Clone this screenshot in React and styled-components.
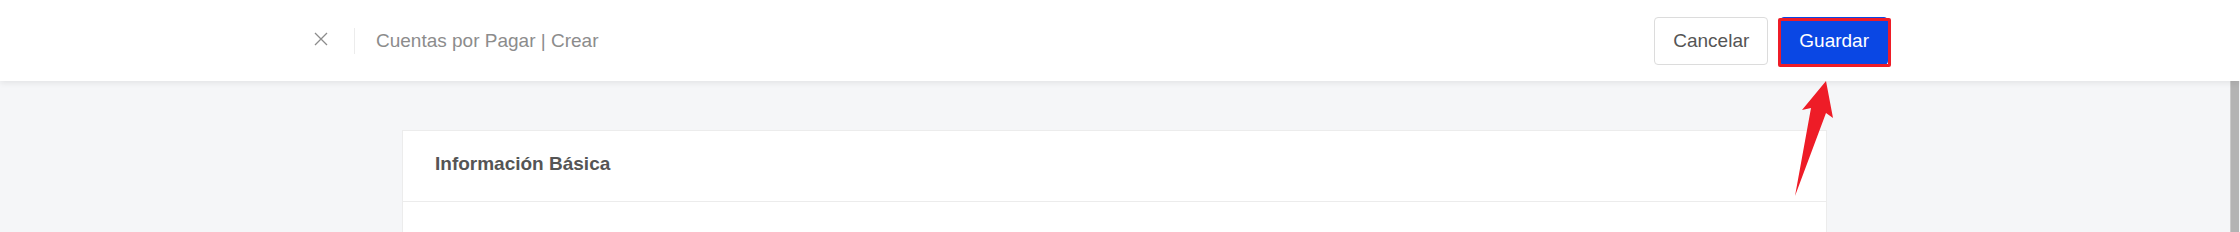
import React from "react";
import styled, { createGlobalStyle } from "styled-components";

const GlobalStyle = createGlobalStyle`
  html, body {
    margin: 0;
    padding: 0;
    background: #f5f6f8;
    font-family: "Liberation Sans", Arial, sans-serif;
  }
`;

const Page = styled.div`
  width: 2240px;
  height: 232px;
  display: flex;
  flex-direction: column;
  overflow: hidden;
  position: relative;
`;

const Header = styled.header`
  height: 81px;
  flex: none;
  background: #fff;
  display: flex;
  align-items: center;
  padding: 0 352px 0 314px;
  box-shadow: 0 2px 6px rgba(0, 0, 0, 0.08);
  position: relative;
  z-index: 1;
`;

const CloseButton = styled.button`
  border: none;
  background: none;
  padding: 0;
  width: 14px;
  height: 14px;
  display: flex;
  margin-top: -3px;
  cursor: pointer;
`;

const Divider = styled.span`
  width: 1px;
  height: 26px;
  background: #ececec;
  margin: 0 21px 0 26px;
`;

const Title = styled.h1`
  margin: 0;
  font-size: 19px;
  font-weight: 400;
  color: #8c8c8c;
  flex: 1;
`;

const Actions = styled.div`
  display: flex;
  gap: 12px;
  align-items: center;
`;

const Button = styled.button`
  height: 48px;
  padding: 0 18px;
  font-family: inherit;
  font-size: 19px;
  border-radius: 4px;
  cursor: pointer;
  border: 1px solid ${(p) => (p.$primary ? "#0a47e4" : "#dcdcdc")};
  background: ${(p) => (p.$primary ? "#0a47e4" : "#fff")};
  color: ${(p) => (p.$primary ? "#fff" : "#555")};
`;

const Highlight = styled.div`
  position: relative;
  &::after {
    content: "";
    position: absolute;
    left: -2px;
    right: -3px;
    top: 1px;
    bottom: -2px;
    border: 3px solid #ee1c27;
    border-radius: 2px;
    pointer-events: none;
  }
`;

const Body = styled.div`
  flex: 1;
  display: flex;
`;

const Main = styled.main`
  flex: 1;
  padding: 49px 0 0 402px;
`;

const Scrollbar = styled.div`
  width: 10px;
  display: flex;
  &::before {
    content: "";
    width: 8px;
    background: #b3b3b3;
    border-left: 1px solid #c9c9c9;
  }
`;

const Card = styled.section`
  width: 1423px;
  background: #fff;
  border: 1px solid #ececec;
  border-bottom: none;
  height: 200px;
`;

const CardHeader = styled.div`
  height: 71px;
  border-bottom: 1px solid #ececec;
  display: flex;
  align-items: center;
  padding: 0 0 5px 32px;
  box-sizing: border-box;
`;

const CardTitle = styled.h2`
  margin: 0;
  font-size: 19px;
  font-weight: 700;
  color: #555;
`;

const Arrow = styled.svg`
  position: absolute;
  left: 0;
  top: 0;
  pointer-events: none;
  z-index: 2;
`;

export default function App() {
  return (
    <>
      <GlobalStyle />
      <Page>
        <Header>
          <CloseButton aria-label="Cerrar">
            <svg width="14" height="14" viewBox="0 0 14 14">
              <path d="M1 1 L13 13 M13 1 L1 13" stroke="#8c8c8c" strokeWidth="1.3" fill="none" />
            </svg>
          </CloseButton>
          <Divider />
          <Title>Cuentas por Pagar | Crear</Title>
          <Actions>
            <Button>Cancelar</Button>
            <Highlight>
              <Button $primary>Guardar</Button>
            </Highlight>
          </Actions>
        </Header>
        <Body>
          <Main>
            <Card>
              <CardHeader>
                <CardTitle>Información Básica</CardTitle>
              </CardHeader>
            </Card>
          </Main>
          <Scrollbar />
        </Body>
        <Arrow width="2240" height="232" viewBox="0 0 2240 232">
          <polygon
            points="1826,81 1833,118 1826,113 1795,196 1811,108 1802,110"
            fill="#ee1c27"
          />
        </Arrow>
      </Page>
    </>
  );
}
